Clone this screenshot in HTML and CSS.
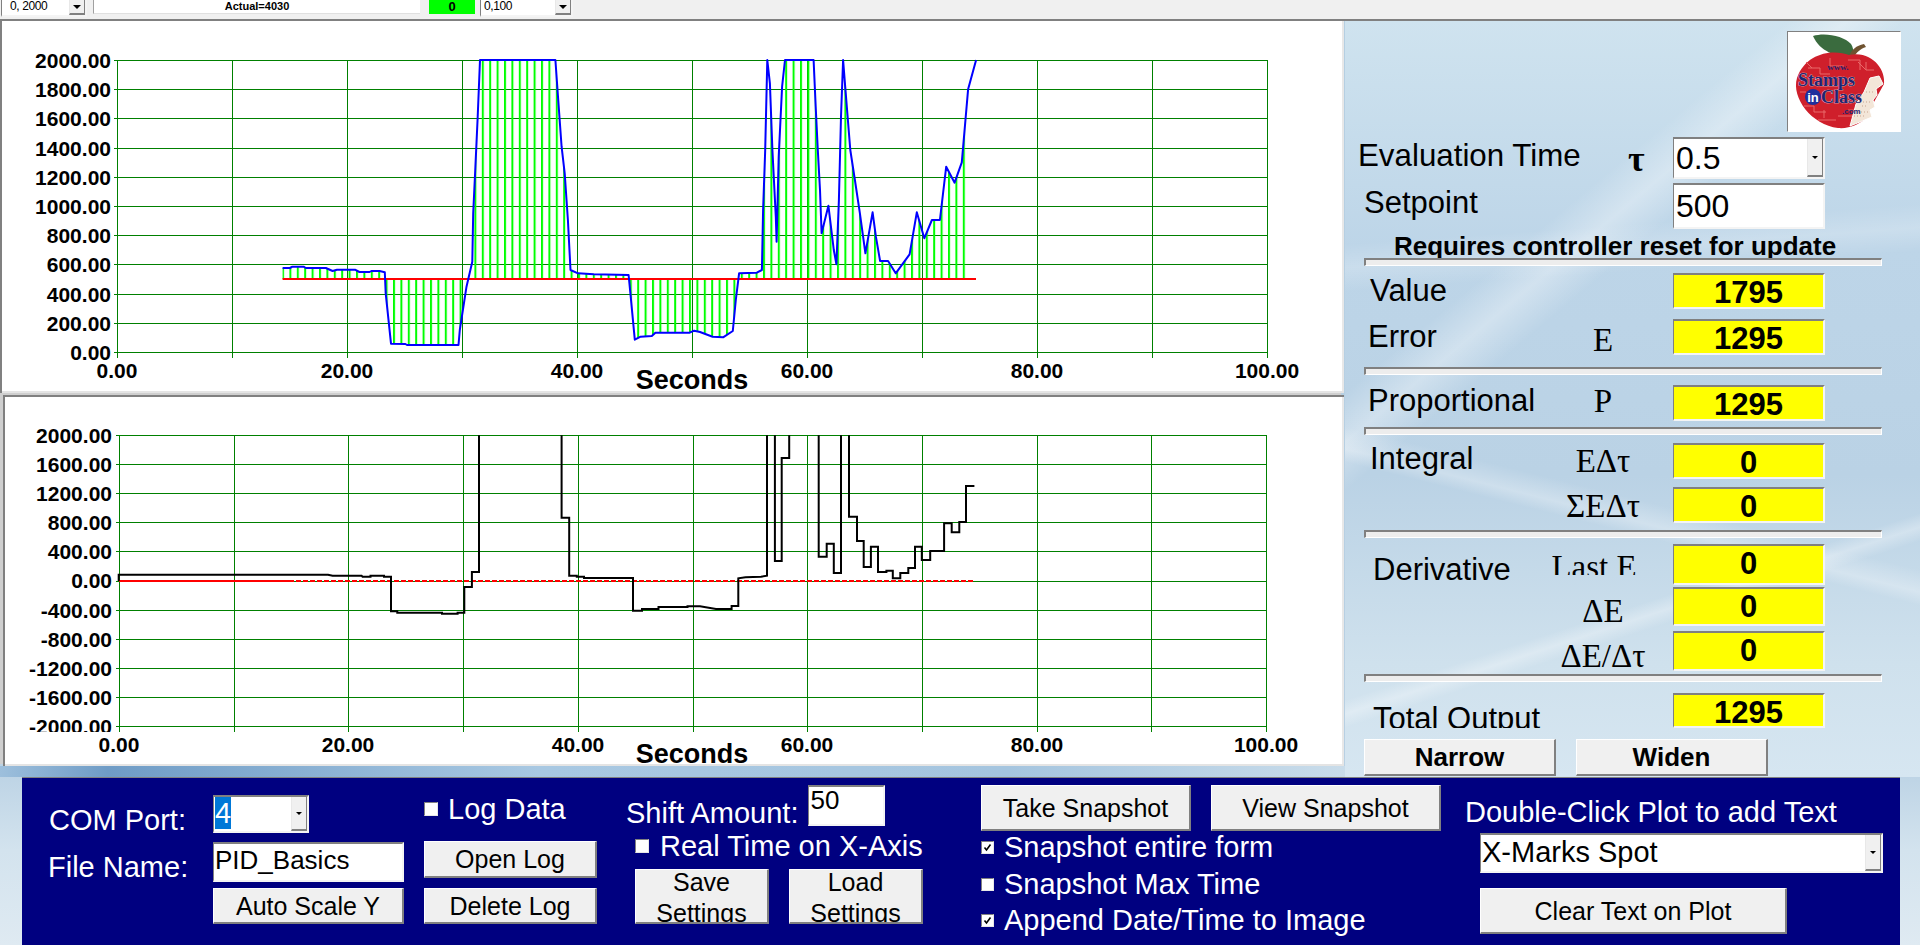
FILE: index.html
```html
<!DOCTYPE html>
<html lang="en">
<head>
<meta charset="utf-8">
<title>PID Basics</title>
<link rel="stylesheet" href="styles.css">
</head>
<body>
<div class="page">
  <header class="topbar">
    <div class="combo combo-tiny combo-range"><span class="combo-text">0, 2000</span><span class="combo-btn"><i class="arrow"></i></span></div>
    <div class="actual">Actual=4030</div>
    <div class="lamp">0</div>
    <div class="combo combo-tiny combo-range2"><span class="combo-text">0,100</span><span class="combo-btn"><i class="arrow"></i></span></div>
  </header>

  <main class="main">
    <section class="plots">
      <div class="plot plot-upper">
        <svg class="chart" width="1344" height="372" viewBox="0 21 1344 372">
          <defs>
            <pattern id="bars" patternUnits="userSpaceOnUse" x="282" y="0" width="7.4" height="20"><rect class="bar" width="2" height="20"/></pattern>
          </defs>
          <path class="grid" d="M117.5 60V358M232.5 60V358M347.5 60V358M462.5 60V358M577.5 60V358M692.5 60V358M807.5 60V358M922.5 60V358M1037.5 60V358M1152.5 60V358M1267.5 60V358"/>
          <path class="grid" d="M114 60.5H1267.5M114 89.5H1267.5M114 118.5H1267.5M114 148.5H1267.5M114 177.5H1267.5M114 206.5H1267.5M114 235.5H1267.5M114 264.5H1267.5M114 294.5H1267.5M114 323.5H1267.5M114 352.5H1267.5"/>
          <polygon class="fill" points="282.6,279 282.6,268 290,268 292.4,266.7 303.6,266.7 305.8,268 325.9,268 332.6,271 337,269.7 355,269.7 359.4,272 369.6,272 371.4,271 379.5,271 384.8,272.3 385.7,293.3 391,343.7 405.4,344 407,345 458.5,345 459.8,330 466.5,286.7 468.8,276.7 472.3,261.7 473.2,213.3 475.4,166.7 477.7,116.7 480,60 555.4,60 558,96.7 561.6,146.7 564.7,173.3 567.9,220 570.5,270 578,273.3 593.8,274.3 628.6,275 630.4,293.3 634.8,339.7 640.6,336.7 651.8,336 655.4,332.7 689.7,332.7 694.2,330.7 700,332 712.6,336.7 723.1,337.3 732.8,331 735.8,300 739.1,273.3 756.8,272.7 761.9,270 763.1,210 765.2,150 767.3,60 769.9,83.3 772.4,150 775.8,216.7 776.6,241.7 778.7,156.7 782.1,86.7 785,60 813.6,60 815.7,106.7 817.8,150 820,190 821.6,233.3 828.4,205.7 833.8,250 836.4,264.3 838.9,200 841,116.7 843.1,60 845.2,86.7 850.3,150 854.9,180 859.9,213.3 865.4,253.3 872.6,212.3 875.9,236.7 880.1,261 888.1,261 895.7,273.3 909.6,254.3 916.8,212.3 924.3,238.3 931.9,220 939.9,220 946.2,166.7 954.6,182.7 961.8,162.3 968.1,89.3 970,89.3 970,279"/>
          <line class="setpoint" x1="282.6" y1="279" x2="976" y2="279"/>
          <polyline class="pv" points="282.6,268 290,268 292.4,266.7 303.6,266.7 305.8,268 325.9,268 332.6,271 337,269.7 355,269.7 359.4,272 369.6,272 371.4,271 379.5,271 384.8,272.3 385.7,293.3 391,343.7 405.4,344 407,345 458.5,345 459.8,330 466.5,286.7 468.8,276.7 472.3,261.7 473.2,213.3 475.4,166.7 477.7,116.7 480,60 555.4,60 558,96.7 561.6,146.7 564.7,173.3 567.9,220 570.5,270 578,273.3 593.8,274.3 628.6,275 630.4,293.3 634.8,339.7 640.6,336.7 651.8,336 655.4,332.7 689.7,332.7 694.2,330.7 700,332 712.6,336.7 723.1,337.3 732.8,331 735.8,300 739.1,273.3 756.8,272.7 761.9,270 763.1,210 765.2,150 767.3,60 769.9,83.3 772.4,150 775.8,216.7 776.6,241.7 778.7,156.7 782.1,86.7 785,60 813.6,60 815.7,106.7 817.8,150 820,190 821.6,233.3 828.4,205.7 833.8,250 836.4,264.3 838.9,200 841,116.7 843.1,60 845.2,86.7 850.3,150 854.9,180 859.9,213.3 865.4,253.3 872.6,212.3 875.9,236.7 880.1,261 888.1,261 895.7,273.3 909.6,254.3 916.8,212.3 924.3,238.3 931.9,220 939.9,220 946.2,166.7 954.6,182.7 961.8,162.3 968.1,89.3 976.1,60"/>
          <g class="ylab">
            <text x="111" y="68">2000.00</text><text x="111" y="97">1800.00</text><text x="111" y="126">1600.00</text><text x="111" y="156">1400.00</text><text x="111" y="185">1200.00</text><text x="111" y="214">1000.00</text><text x="111" y="243">800.00</text><text x="111" y="272">600.00</text><text x="111" y="302">400.00</text><text x="111" y="331">200.00</text><text x="111" y="360">0.00</text>
          </g>
          <g class="xlab">
            <text x="117" y="378">0.00</text><text x="347" y="378">20.00</text><text x="577" y="378">40.00</text><text x="807" y="378">60.00</text><text x="1037" y="378">80.00</text><text x="1267" y="378">100.00</text>
          </g>
          <text class="axis-title" x="692" y="389">Seconds</text>
        </svg>
      </div>
      <div class="plot plot-lower">
        <svg class="chart" width="1341" height="371" viewBox="3 395 1341 371">
          <defs>
            <clipPath id="cutlabel"><rect x="0" y="700" width="118" height="32"/></clipPath>
          </defs>
          <path class="grid" d="M119.5 435V732M234.5 435V732M348.5 435V732M463.5 435V732M578.5 435V732M693.5 435V732M807.5 435V732M922.5 435V732M1037.5 435V732M1151.5 435V732M1266.5 435V732"/>
          <path class="grid" d="M116 435.5H1266.5M116 464.5H1266.5M116 493.5H1266.5M116 522.5H1266.5M116 551.5H1266.5M116 581.5H1266.5M116 610.5H1266.5M116 639.5H1266.5M116 668.5H1266.5M116 697.5H1266.5M116 726.5H1266.5"/>
          <line class="zero" x1="119" y1="581" x2="289" y2="581"/>
          <line class="zero zero-dash" x1="289" y1="581" x2="974" y2="581"/>
          <polyline class="out" points="118.7,581 118.7,574.7 328,574.7 332.6,575.7 361.6,575.7 362.5,576.7 370.5,576.7 370.5,575.7 384,575.7 384,576.7 391,576.7 391,611.3 397.3,611.3 397.3,612.7 442,612.7 442,613.7 457.6,613.7 457.6,612.7 464.3,612.7 464.3,587 471.9,587 471.9,572 479,572 479,435.3"/>
          <polyline class="out" points="561.6,435.3 561.6,517.7 569.2,517.7 569.2,575.7 576.8,575.7 576.8,576.7 584,576.7 584,578 633,578 633,610.7 642,610.7 642,609 658.5,609 658.5,607 687.5,607 687.5,606.3 700,606.3 716,609 731.6,609 731.6,606 738.3,606 738.3,578.3 745.5,577.3 761,576.7 767,575.7 767,435.3"/>
          <polyline class="out" points="774.9,435.3 774.9,561 781.7,561 781.7,458 789.2,458 789.2,435.3"/>
          <polyline class="out" points="818.7,435.3 818.7,556.7 826.7,556.7 826.7,543.7 833.8,543.7 833.8,573 841,573 841,435.3"/>
          <polyline class="out" points="849,435.3 849,516.7 857,516.7 857,541 863.7,541 863.7,567 870.9,567 870.9,546.7 878,546.7 878,572 886.4,572 886.4,570.7 892.8,570.7 892.8,578.3 900.3,578.3 900.3,573 908.3,573 908.3,568 915,568 915,546.7 921.8,546.7 921.8,560 930.2,560 930.2,551 944.1,551 944.1,523.3 951.7,523.3 951.7,532.3 959.3,532.3 959.3,522 966,522 966,486 974.4,486"/>
          <g class="ylab">
            <text x="112" y="443">2000.00</text><text x="112" y="472">1600.00</text><text x="112" y="501">1200.00</text><text x="112" y="530">800.00</text><text x="112" y="559">400.00</text><text x="112" y="588">0.00</text><text x="112" y="618">-400.00</text><text x="112" y="647">-800.00</text><text x="112" y="676">-1200.00</text><text x="112" y="705">-1600.00</text><text x="112" y="734" clip-path="url(#cutlabel)">-2000.00</text>
          </g>
          <g class="xlab">
            <text x="119" y="752">0.00</text><text x="348" y="752">20.00</text><text x="578" y="752">40.00</text><text x="807" y="752">60.00</text><text x="1037" y="752">80.00</text><text x="1266" y="752">100.00</text>
          </g>
          <text class="axis-title" x="692" y="763">Seconds</text>
        </svg>
      </div>
      <div class="plots-foot"></div>
    </section>

    <aside class="side">
      <div class="logo">
        <svg width="112" height="99" viewBox="0 0 112 99">
          <path class="logo-leaf" d="M25 4C37 0 56 4 63 12C67 18 65 25 60 25C48 24 32 20 25 4Z"/>
          <path class="logo-stem" d="M61 24C64 17 68 14 76 12L78 15C72 17 68 21 66 25Z"/>
          <path class="logo-apple" d="M61 23C46 17 18 20 9 46C3 66 24 93 50 96C62 97 70 92 76 88L96 52C98 38 84 18 61 23Z"/>
          <path class="logo-circuit" d="M20 36h12v6h10M42 26v8h14M60 28h12v10M78 30v8h8M16 74h10v6h12M30 88h18M70 30l8 8M12 60h6M50 84h14M18 30l6 6M36 78v8M60 78h8"/>
          <path class="logo-bite" d="M62 94L84 85L82 78L87 75L85 68L89 63L88 57L95 52L91 44L82 46L76 60L68 72Z"/>
          <path class="logo-holes" d="M72 70h10M74 74h6M78 60h8M66 84h12M70 80h10"/>
          <text class="logo-www" x="50" y="38">www.</text>
          <text class="logo-big" x="10" y="54">Stamps</text>
          <circle class="logo-in-dot" cx="25" cy="65" r="8"/>
          <text class="logo-in" x="25" y="70">in</text>
          <text class="logo-big" x="33" y="71">Class</text>
          <text class="logo-com" x="54" y="82">.com</text>
        </svg>
      </div>

      <div class="row row-eval">
        <div class="name name-eval p4">Evaluation Time</div>
        <div class="sym sym-tau">τ</div>
        <div class="combo combo-big"><span class="combo-text">0.5</span><span class="combo-btn"><i class="arrow"></i></span></div>
      </div>
      <div class="row row-setpoint">
        <div class="name p5">Setpoint</div>
        <div class="sym"></div>
        <input class="field field-big" value="500" readonly>
      </div>
      <div class="requires">Requires controller reset for update</div>
      <div class="sep"></div>

      <div class="row row-value">
        <div class="name name-x1 p3">Value</div><div class="sym"></div><div class="led">1795</div>
      </div>
      <div class="row row-m10">
        <div class="name name-x2 p3">Error</div><div class="sym p6">E</div><div class="led">1295</div>
      </div>
      <div class="sep sep-m12"></div>
      <div class="row row-m10">
        <div class="name name-x2 p1">Proportional</div><div class="sym p1">P</div><div class="led">1295</div>
      </div>
      <div class="sep sep-m6"></div>
      <div class="row row-m8">
        <div class="name name-x1 p1">Integral</div><div class="sym p3">EΔτ</div><div class="led">0</div>
      </div>
      <div class="row row-m8">
        <div class="name"></div><div class="sym p4">ΣEΔτ</div><div class="led">0</div>
      </div>
      <div class="sep sep-m7"></div>
      <div class="row row-m6 row-35">
        <div class="name name-x3 p11">Derivative</div><div class="sym sym-last p8">Last E</div><div class="led">0</div>
      </div>
      <div class="row row-m8 row-35">
        <div class="name"></div><div class="sym p9">ΔE</div><div class="led">0</div>
      </div>
      <div class="row row-m9">
        <div class="name"></div><div class="sym p10">ΔE/Δτ</div><div class="led">0</div>
      </div>
      <div class="sep sep-m7"></div>
      <div class="row row-m11 row-35">
        <div class="name name-x3 name-total p11">Total Output</div><div class="led">1295</div>
      </div>
      <div class="width-btns">
        <button class="btn btn-bold">Narrow</button>
        <button class="btn btn-bold">Widen</button>
      </div>
    </aside>
  </main>

  <footer class="panel">
    <div class="col col-labels">
      <div class="plabel plabel-com">COM Port:</div>
      <div class="plabel plabel-file">File Name:</div>
    </div>
    <div class="col col-port">
      <div class="combo combo-port"><span class="combo-text"><span class="hilite">4</span></span><span class="combo-btn"><i class="arrow"></i></span></div>
      <input class="field field-file" value="PID_Basics" readonly>
      <button class="btn btn-auto">Auto Scale Y</button>
    </div>
    <div class="col col-log">
      <label class="check check-log"><span class="box"></span><span class="plabel">Log Data</span></label>
      <button class="btn btn-open">Open Log</button>
      <button class="btn btn-delete">Delete Log</button>
    </div>
    <div class="col col-shift">
      <div class="shift-row">
        <span class="plabel shift-label">Shift Amount:</span>
        <input class="field field-shift" value="50" readonly>
      </div>
      <label class="check check-real"><span class="box"></span><span class="plabel">Real Time on X-Axis</span></label>
      <div class="settings">
        <button class="btn btn-settings"><span>Save<br>Settings</span></button>
        <button class="btn btn-settings"><span>Load<br>Settings</span></button>
      </div>
    </div>
    <div class="col col-snap">
      <div class="snap-btns">
        <button class="btn btn-take">Take Snapshot</button>
        <button class="btn btn-view">View Snapshot</button>
      </div>
      <label class="check check-snap1"><span class="box box-small"><svg width="9" height="9" viewBox="0 0 9 9"><path class="tick" d="M1.5 4.5L3.5 7L7.5 1.5"/></svg></span><span class="plabel">Snapshot entire form</span></label>
      <label class="check check-snap2"><span class="box box-small"></span><span class="plabel">Snapshot Max Time</span></label>
      <label class="check check-snap3"><span class="box box-small"><svg width="9" height="9" viewBox="0 0 9 9"><path class="tick" d="M1.5 4.5L3.5 7L7.5 1.5"/></svg></span><span class="plabel">Append Date/Time to Image</span></label>
    </div>
    <div class="col col-text">
      <div class="plabel plabel-dbl">Double-Click Plot to add Text</div>
      <div class="combo combo-text-kind"><span class="combo-text">X-Marks Spot</span><span class="combo-btn"><i class="arrow"></i></span></div>
      <button class="btn btn-clear">Clear Text on Plot</button>
    </div>
  </footer>
</div>
</body>
</html>
```
FILE: styles.css
```css
* { box-sizing: border-box; }
html, body { margin: 0; padding: 0; background: #fff; overflow: hidden; }
body { width: 1920px; height: 947px; font-family: "Liberation Sans", Arial, sans-serif; color: #000; }

.page {
  width: 1920px;
  height: 945px;
  display: flex;
  flex-direction: column;
  background: linear-gradient(180deg, #b5cfe2 0, #b8d0e3 80%, #d3e3ee 90%, #dfeaf2 100%);
}

/* top strip */
.topbar {
  height: 21px;
  flex: none;
  display: flex;
  align-items: flex-start;
  padding-left: 1px;
  background: #f0f0f0;
  border-bottom: 2px solid #808080;
}
.actual {
  width: 327px;
  height: 14px;
  margin-left: 6px;
  background: #fff;
  border-left: 1px solid #a0a0a0;
  border-bottom: 1px solid #e0e0e0;
  text-align: center;
  font: bold 11px/12px "Liberation Sans", Arial, sans-serif;
}
.lamp {
  width: 46px;
  height: 14px;
  margin-left: 9px;
  background: #00ff00;
  text-align: center;
  font: bold 13px/14px "Liberation Sans", Arial, sans-serif;
}

/* combos */
.combo {
  display: flex;
  justify-content: space-between;
  background: #fff;
  border-style: solid;
  border-width: 2px 2px 2px 1px;
  border-color: #808080 #f4f4f4 #f4f4f4 #808080;
  overflow: hidden;
}
.combo-text { display: block; white-space: nowrap; }
.combo-btn {
  flex: none;
  width: 16px;
  display: flex;
  align-items: center;
  justify-content: center;
  background: #f0f0f0;
  border-right: 1px solid #808080;
  border-bottom: 2px solid #808080;
  border-left: 1px solid #e8e8e8;
}
.arrow {
  display: block;
  width: 0;
  height: 0;
  border-style: solid;
  border-width: 3px 3px 0;
  border-color: #000 transparent transparent;
}
.combo-tiny { height: 17px; border-top: 0; font-size: 12px; line-height: 13px; letter-spacing: -0.4px; }
.combo-range { width: 86px; }
.combo-range .combo-text { padding-left: 8px; }
.combo-range2 { width: 93px; margin-left: 5px; }
.combo-range2 .combo-text { padding-left: 3px; }
.combo-tiny .arrow { border-width: 4px 4px 0; }
.combo-big { height: 42px; font-size: 32px; line-height: 38px; }
.combo-big .combo-text { padding-left: 2px; }
.combo-port { width: 96px; height: 38px; font-size: 29px; line-height: 32px; }
.combo-port .combo-text { padding-left: 1px; }
.hilite { display: inline-block; width: 16px; background: #0078d7; color: #fff; }
.combo-text-kind { width: 403px; height: 40px; margin: 6px 0 0 15px; font-size: 29px; line-height: 34px; }
.combo-text-kind .combo-text { padding-left: 1px; }

/* main area */
.main { flex: none; height: 756px; display: flex; }
.plots { flex: none; width: 1345px; display: flex; flex-direction: column; }
.plot { background: #fff; flex: none; }
.plot-upper { width: 1344px; height: 372px; box-shadow: inset 2px 0 0 #808080, inset 0 -2px 0 #e4e4e4, inset -2px 0 0 #e8e8e8; }
.plot-lower { width: 1341px; height: 371px; margin: 2px 0 0 3px; box-shadow: -3px -2px 0 #cfcfcf, inset 2px 2px 0 #808080, inset 0 -2px 0 #e4e4e4, inset -2px 0 0 #e8e8e8; }
.plots-foot { flex: 1; background: linear-gradient(90deg, #9dbfdc 0, #6f9cc6 8%, #a8c8e2 40%, #a5c5df 75%, #c9dcea 100%); }
.chart { display: block; overflow: visible; }

.grid { fill: none; stroke: #008000; stroke-width: 1; shape-rendering: crispEdges; }
.bar { fill: #00ff00; }
.fill { fill: url(#bars); stroke: none; }
.setpoint { stroke: #ff0000; stroke-width: 2; }
.pv { fill: none; stroke: #0000ff; stroke-width: 2; stroke-linejoin: round; }
.zero { stroke: #ff0000; stroke-width: 2; }
.zero-dash { stroke-dasharray: 5 2; }
.out { fill: none; stroke: #000; stroke-width: 2; stroke-linejoin: miter; }
.ylab text { font: bold 21px "Liberation Sans", Arial, sans-serif; text-anchor: end; }
.xlab text { font: bold 21px "Liberation Sans", Arial, sans-serif; text-anchor: middle; }
.axis-title { font: bold 27px "Liberation Sans", Arial, sans-serif; text-anchor: middle; }

/* right column */
.side {
  flex: none;
  width: 575px;
  height: 756px;
  padding: 10px 19px 0 19px;
  display: flex;
  flex-direction: column;
  background:
    linear-gradient(14deg, transparent 35%, rgba(255,255,255,.28) 36.5%, transparent 39%),
    linear-gradient(162deg, transparent 72%, rgba(255,255,255,.3) 73.5%, transparent 75%),
    linear-gradient(140deg, transparent 30%, rgba(255,255,255,.32) 34%, transparent 38%),
    linear-gradient(176deg, transparent 28%, rgba(255,255,255,.2) 31%, transparent 34%),
    linear-gradient(180deg, #cfe3ef 0, #bdd5e8 30%, #bad2e5 60%, #cfe1ed 85%, #d6e6f1 100%);
}
.logo {
  align-self: flex-end;
  width: 114px;
  height: 101px;
  background: #fff;
  border-style: solid;
  border-width: 1px;
  border-color: #808080 #fff #fff #808080;
}
.logo svg { display: block; }
.logo-leaf { fill: #3a6b3e; }
.logo-stem { fill: #6f5230; }
.logo-apple { fill: #cf1f2b; }
.logo-circuit { fill: none; stroke: #e96a6a; stroke-width: 1; }
.logo-bite { fill: #f3e6d8; stroke: #fff; stroke-width: 1; }
.logo-holes { fill: none; stroke: #c9a58f; stroke-width: 1; stroke-dasharray: 1 2; }
.logo-big { font: bold 18px "Liberation Serif", serif; fill: #1f2470; stroke: #dfe0ee; stroke-width: .6px; paint-order: stroke; }
.logo-www { font: bold 9px "Liberation Serif", serif; fill: #1f2470; text-anchor: middle; }
.logo-com { font: bold 8px "Liberation Sans", sans-serif; fill: #1f2470; }
.logo-in-dot { fill: #1f2f9c; }
.logo-in { font: bold 13px "Liberation Sans", sans-serif; fill: #fff; text-anchor: middle; }

.row { flex: none; height: 36px; display: grid; grid-template-columns: 176px 126px 159px; column-gap: 0; }
.row > .led, .row > .combo, .row > .field { margin-left: 7px; width: 152px; }
.row-eval { height: 42px; margin-top: 5px; }
.row-setpoint { height: 46px; margin-top: 4px; }
.row-value { margin-top: 7px; }
.row-m6 { margin-top: 6px; }
.row-m8 { margin-top: 8px; }
.row-m9 { margin-top: 9px; }
.row-m10 { margin-top: 10px; }
.row-m11 { margin-top: 11px; }
.row-35 { height: 35px; }

.name { font-size: 31px; line-height: 30px; white-space: nowrap; overflow: visible; }
.name-eval { margin-left: -6px; font-size: 31.3px; }
.name-x1 { padding-left: 6px; }
.name-x2 { padding-left: 4px; }
.name-x3 { padding-left: 9px; }
.name-total { grid-column: span 2; height: 35px; overflow: hidden; }
.sym {
  font-family: "Liberation Serif", "Times New Roman", serif;
  font-size: 33px;
  line-height: 30px;
  text-align: center;
  white-space: nowrap;
}
.sym-tau { font-weight: bold; text-align: left; padding: 7px 0 0 88px; font-size: 36px; }
.sym-last { height: 31px; overflow: hidden; padding-right: 18px; }
.p1 { padding-top: 1px; }
.p3 { padding-top: 3px; }
.p4 { padding-top: 4px; }
.p5 { padding-top: 5px; }
.p6 { padding-top: 6px; }
.p8 { padding-top: 8px; }
.p9 { padding-top: 9px; }
.p10 { padding-top: 10px; }
.p11 { padding-top: 11px; }

.requires { flex: none; height: 26px; margin: 4px 0 0 30px; font: bold 26px/26px "Liberation Sans", Arial, sans-serif; white-space: nowrap; }
.sep {
  flex: none;
  width: 518px;
  height: 8px;
  margin-top: -1px;
  background: #ededed;
  border-style: solid;
  border-width: 2px 1px 1px 2px;
  border-color: #808080 #fff #fff #808080;
}
.sep-m12 { margin-top: 12px; }
.sep-m6 { margin-top: 6px; }
.sep-m7 { margin-top: 7px; }

.led {
  background: #ffff00;
  border-style: solid;
  border-width: 2px 2px 2px 1px;
  border-color: #808080 #f4f4f4 #f4f4f4 #808080;
  padding-top: 5px;
  text-align: center;
  font: bold 31px/26px "Liberation Sans", Arial, sans-serif;
}

.field {
  display: block;
  margin: 0;
  background: #fff;
  color: #000;
  font-family: "Liberation Sans", Arial, sans-serif;
  border-style: solid;
  border-width: 2px 2px 2px 1px;
  border-color: #808080 #f4f4f4 #f4f4f4 #808080;
  outline: none;
  border-radius: 0;
}
.field-big { height: 46px; font-size: 32px; padding: 0 0 0 2px; }
.field-file { width: 191px; height: 40px; margin-top: 9px; font-size: 26px; padding: 0 0 4px 1px; }
.field-shift { width: 77px; height: 41px; font-size: 26px; padding: 0 0 10px 2px; }

.btn {
  display: block;
  margin: 0;
  padding: 0;
  background: #f0f0f0;
  color: #000;
  border-style: solid;
  border-width: 1px 2px 2px 1px;
  border-color: #fff #808080 #808080 #fff;
  border-radius: 0;
  font: 25px/30px "Liberation Sans", Arial, sans-serif;
  white-space: nowrap;
  overflow: hidden;
}
.btn-bold { width: 192px; height: 37px; font: bold 26px/30px "Liberation Sans", Arial, sans-serif; }
.width-btns { flex: none; display: flex; gap: 20px; margin-top: 11px; position: relative; z-index: 1; }

/* navy panel */
.panel {
  flex: none;
  width: 1878px;
  height: 168px;
  margin-left: 22px;
  padding-left: 26px;
  display: flex;
  align-items: flex-start;
  background: #000080;
  border-top: 1px solid #808080;
}
.col { flex: none; display: flex; flex-direction: column; align-items: flex-start; }
.plabel { display: block; color: #fff; font-size: 29px; line-height: 30px; white-space: nowrap; }
.col-labels { width: 165px; }
.plabel-com { margin: 27px 0 0 1px; }
.plabel-file { margin-top: 17px; }
.col-port { width: 191px; padding-top: 17px; }
.btn-auto { width: 191px; height: 36px; margin-top: 6px; }
.col-log { width: 173px; margin-left: 20px; padding-top: 16px; }
.check { display: flex; align-items: center; }
.box {
  flex: none;
  width: 14px;
  height: 14px;
  background: #fff;
  border-style: solid;
  border-width: 1px;
  border-color: #808080 #e8e8e8 #e8e8e8 #808080;
  display: flex;
  align-items: center;
  justify-content: center;
}
.box-small { width: 13px; height: 13px; }
.tick { fill: none; stroke: #000; stroke-width: 1.6; }
.check-log { gap: 10px; }
.btn-open { width: 173px; height: 37px; margin-top: 17px; }
.btn-delete { width: 173px; height: 36px; margin-top: 10px; }
.col-shift { width: 297px; margin-left: 29px; padding-top: 7px; }
.shift-row { display: flex; gap: 9px; }
.shift-label { padding-top: 13px; height: 41px; }
.check-real { margin: 5px 0 0 9px; gap: 11px; }
.settings { display: flex; gap: 20px; margin: 8px 0 0 9px; }
.btn-settings { width: 134px; height: 55px; }
.btn-settings span { display: block; margin-top: -3px; line-height: 31px; }
.col-snap { width: 460px; margin-left: 58px; padding-top: 7px; }
.snap-btns { display: flex; gap: 20px; }
.btn-take { width: 210px; height: 46px; }
.btn-view { width: 230px; height: 46px; }
.check-snap1 { margin-top: 1px; gap: 10px; }
.check-snap2 { margin-top: 7px; gap: 10px; }
.check-snap3 { margin-top: 6px; gap: 10px; }
.col-text { margin-left: 24px; padding-top: 19px; }
.btn-clear { width: 307px; height: 46px; margin: 15px 0 0 15px; }
```
